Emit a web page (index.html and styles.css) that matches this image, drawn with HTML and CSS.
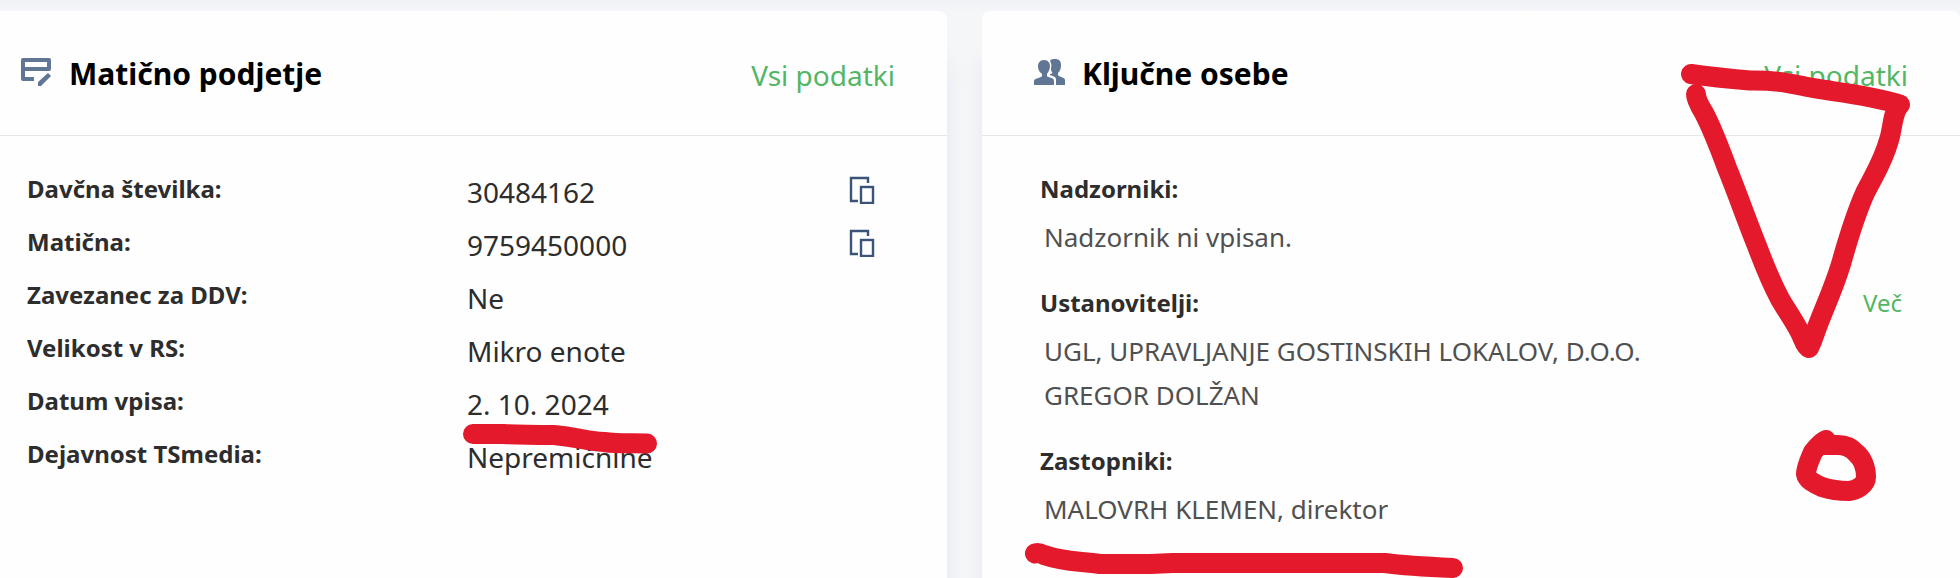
FILE: index.html
```html
<!doctype html>
<html lang="sl">
  <head>
    <meta charset="UTF-8" />
    <meta name="viewport" content="width=device-width, initial-scale=1.0" />
    <title>Matično podjetje</title>
    <link rel="stylesheet" href="styles.css">
  </head>
  <body>
    <div class="top-shadow"></div>
    <main class="cards">
      <section class="card">
        <div class="card-header">
          <svg class="card-icon" viewBox="0 0 32 32">
            <path d="M13 22H2V3H28V12H2" fill="none" stroke="currentColor" stroke-width="4" stroke-linejoin="round" />
            <path d="M17 29V25L27 16L30 19L20 29Z" fill="currentColor" />
          </svg>
          <h2>Matično podjetje</h2>
          <a class="all-link" href="#">Vsi podatki</a>
        </div>
        <div class="card-body">
          <dl class="data">
            <div class="data-row">
              <dt>Davčna številka:</dt>
              <dd>30484162</dd>
              <dd class="action">
                <button type="button" class="copy" aria-label="Kopiraj davčno številko">
                  <svg viewBox="0 0 26 28">
                    <path d="M9 25H2V2H19V7" />
                    <rect x="12" y="11" width="12" height="16" />
                  </svg>
                </button>
              </dd>
            </div>
            <div class="data-row">
              <dt>Matična:</dt>
              <dd>9759450000</dd>
              <dd class="action">
                <button type="button" class="copy" aria-label="Kopiraj matično številko">
                  <svg viewBox="0 0 26 28">
                    <path d="M9 25H2V2H19V7" />
                    <rect x="12" y="11" width="12" height="16" />
                  </svg>
                </button>
              </dd>
            </div>
            <div class="data-row">
              <dt>Zavezanec za DDV:</dt>
              <dd>Ne</dd>
            </div>
            <div class="data-row">
              <dt>Velikost v RS:</dt>
              <dd>Mikro enote</dd>
            </div>
            <div class="data-row">
              <dt>Datum vpisa:</dt>
              <dd>2. 10. 2024</dd>
            </div>
            <div class="data-row">
              <dt>Dejavnost TSmedia:</dt>
              <dd>Nepremičnine</dd>
            </div>
          </dl>
        </div>
      </section>

      <section class="card">
        <div class="card-header">
          <svg class="card-icon" viewBox="0 0 32 32" fill="currentColor">
            <path d="M16 4C17 2 19 2 21 2C25 2 27 4 27 8C27 12 26 14 24 16V18C25 20 31 20 31 23V28H22V22C22 20 19 19 16 18V17C18 17 19 16 18 15C17 14 17 13 17 11C18 8 17 6 16 4Z" />
            <path d="M10 3C14 3 16 6 16 9C16 13 14 15 13 17V19C14 21 20 20 20 24V28H0V24C0 21 7 21 8 19V17C5 15 4 12 4 9C4 6 6 3 10 3Z" />
          </svg>
          <h2>Ključne osebe</h2>
          <a class="all-link" href="#">Vsi podatki</a>
        </div>
        <div class="card-body">
          <div class="group">
            <h3>Nadzorniki:</h3>
            <ul>
              <li>Nadzornik ni vpisan.</li>
            </ul>
          </div>
          <div class="group">
            <div class="group-title">
              <h3>Ustanovitelji:</h3>
              <a class="more-link" href="#">Več</a>
            </div>
            <ul>
              <li>UGL, UPRAVLJANJE GOSTINSKIH LOKALOV, D.O.O.</li>
              <li>GREGOR DOLŽAN</li>
            </ul>
          </div>
          <div class="group">
            <h3>Zastopniki:</h3>
            <ul>
              <li>MALOVRH KLEMEN, direktor</li>
            </ul>
          </div>
        </div>
      </section>
    </main>

    <!-- red marker strokes -->
    <svg class="marker" viewBox="0 0 1960 578" aria-hidden="true">
      <path d="M473 434H504C520 435 536 435 554 435C578 437 584 441 604 442C618 444 630 443 647 443.5" />
      <path d="M1691 74C1711 77 1732 79 1750 80.5C1782 80 1795 85 1817 88.7C1845 93 1873 96 1900 104.5C1892 113 1893 128 1889 140C1883 162 1874 175 1865 193C1857 211 1849 236 1843 257C1836 284 1823 310 1815 333Q1812 342 1809 348Q1806 347 1803 339C1798 326 1788 313 1780 299C1771 282 1763 262 1757 246C1745 216 1738 195 1727 168C1720 149 1713 130 1704 113Q1696 100 1696 94" />
      <path d="M1826 440Q1822 441 1813 452C1810 459 1806 467 1806 474C1807 480 1815 484 1822 487C1831 490 1843 491 1849 491C1858 490 1866 484 1866 477C1866 467 1862 458 1856 453C1850 446 1843 445 1838 445H1820" />
      <path d="M1035 553.5Q1038 552 1044 555C1064 562 1080 561 1100 564H1150L1173 563H1385C1407 566 1430 567 1453 568" />
    </svg>
  </body>
</html>
```

FILE: styles.css
```css
* {
  box-sizing: border-box;
}
body {
  margin: 0;
  min-height: 100vh;
  position: relative;
  overflow: hidden;
  background: #f5f6f8;
  color: #2d2d2d;
  font-family: "Noto Sans", "Open Sans", sans-serif;
  font-size: 24px;
}
h2,
h3,
ul,
dl,
dd {
  margin: 0;
  padding: 0;
}
a {
  color: #53b664;
  text-decoration: none;
}
.top-shadow {
  height: 11px;
  background: linear-gradient(#eff1f6, #f5f6f8);
}
.cards {
  display: grid;
  grid-template-columns: 1fr 1fr;
  gap: 35px;
  min-height: calc(100vh - 11px);
  margin-left: -31px;
}
.card {
  background: #fefefe;
  border-radius: 8px 8px 0 0;
  box-shadow: 0 50px 20px rgba(205, 216, 232, 0.4);
}
.card-header {
  display: flex;
  align-items: center;
  gap: 16px;
  height: 125px;
  padding: 0 52px;
  border-bottom: 1px solid #e6e6e6;
}
.card-icon {
  width: 32px;
  height: 32px;
  color: #617595;
}
.card-header h2 {
  flex: 1;
  color: #000;
  font-size: 30px;
  font-weight: 700;
}
.all-link {
  padding-top: 4px;
  font-size: 28px;
}
.card-body {
  padding: 30px 58px 16px;
}
.data-row {
  display: flex;
  align-items: flex-start;
  height: 53px;
}
.data-row dt,
.group h3 {
  font-size: 24px;
  font-weight: 700;
  line-height: 46px;
}
.data-row dt {
  width: 440px;
}
.data-row dd {
  flex: 1;
  font-size: 28px;
  line-height: 53px;
}
.data-row .action {
  flex: none;
  padding: 10px 14px 0 0;
}
.copy {
  display: block;
  padding: 0;
  border: 0;
  background: none;
  cursor: pointer;
}
.copy svg {
  display: block;
  width: 26px;
  height: 28px;
  fill: none;
  stroke: #3b5379;
  stroke-width: 2.4;
}
.group + .group {
  margin-top: 21px;
}
.group-title {
  display: flex;
  justify-content: space-between;
  line-height: 46px;
}
.group ul {
  padding: 3px 0 0 4px;
  list-style: none;
}
.group li {
  color: #505050;
  font-size: 26px;
  line-height: 44px;
}
.more-link {
  font-size: 24px;
}
.marker {
  position: absolute;
  top: 0;
  left: 0;
  width: 100%;
  pointer-events: none;
  fill: none;
  stroke: #e4192b;
  stroke-width: 20;
  stroke-linecap: round;
  stroke-linejoin: round;
}
```
